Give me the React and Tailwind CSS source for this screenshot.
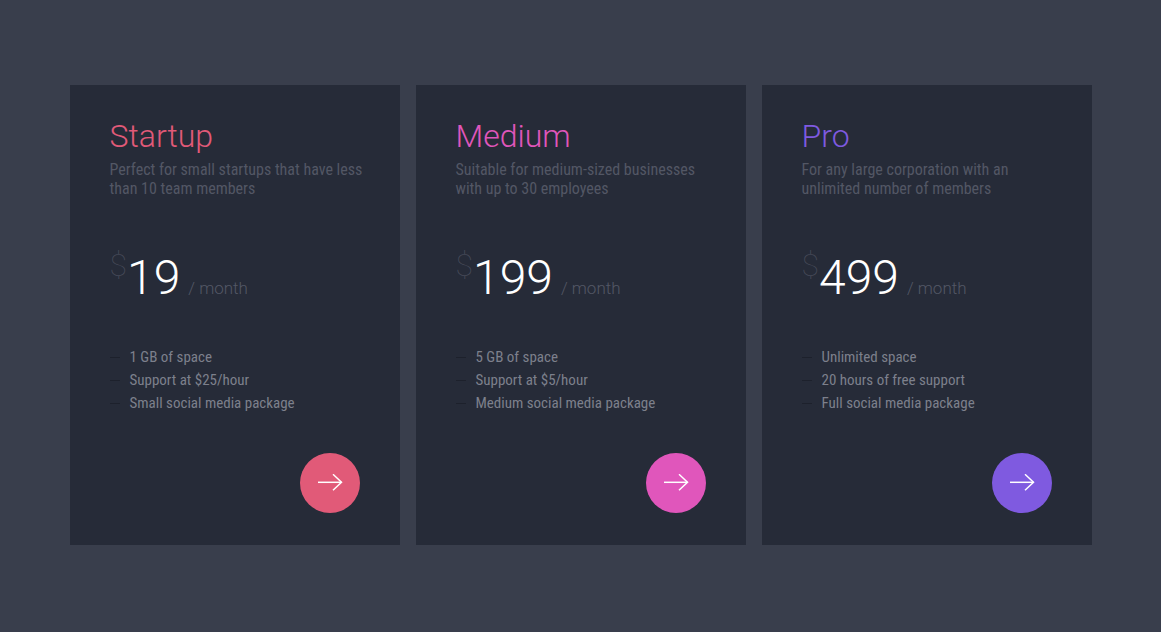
import React from "react";

const plans = [
  {
    name: "Startup",
    color: "text-[#e15a78]",
    button: "bg-[#e15a78]",
    description: ["Perfect for small startups that have less", "than 10 team members"],
    price: "19",
    features: ["1 GB of space", "Support at $25/hour", "Small social media package"],
  },
  {
    name: "Medium",
    color: "text-[#e056bb]",
    button: "bg-[#e056bb]",
    description: ["Suitable for medium-sized businesses", "with up to 30 employees"],
    price: "199",
    features: ["5 GB of space", "Support at $5/hour", "Medium social media package"],
  },
  {
    name: "Pro",
    color: "text-[#7f5ae0]",
    button: "bg-[#7f5ae0]",
    description: ["For any large corporation with an", "unlimited number of members"],
    price: "499",
    features: ["Unlimited space", "20 hours of free support", "Full social media package"],
  },
];

function ArrowIcon() {
  return (
    <svg width="26" height="18" viewBox="0 0 26 18" fill="none" stroke="#ffffff" strokeWidth="1.5">
      <path d="M1 8.3H24.5" />
      <path d="M16 0.3L24.5 8.3L16 16.3" />
    </svg>
  );
}

function PlanCard({ plan }) {
  return (
    <div className="w-[330px] h-[460px] bg-[#262b38] pt-[31px] px-10 flex flex-col">
      <h2 className={`text-[32px] leading-10 font-light ${plan.color}`}>{plan.name}</h2>
      <p className="mt-[4px] text-base leading-[19px] text-[#535765] [font-stretch:75%] whitespace-nowrap">
        {plan.description[0]}
        <br />
        {plan.description[1]}
      </p>
      <div className="mt-[44px] h-[60px] flex items-start">
        <span className="text-[32px] leading-10 font-thin text-[#454957] mt-[3px]">$</span>
        <span className="text-[48px] leading-[60px] font-light text-white mt-[6px]">{plan.price}</span>
        <span className="ml-[8px] mt-[34px] text-[17px] leading-6 font-light text-[#535765]">/ month</span>
      </div>
      <ul className="mt-[44px] flex flex-col">
        {plan.features.map((feature) => (
          <li key={feature} className="h-[23px] flex items-center text-[15px] text-[#7d808c] [font-stretch:75%]">
            <span className="w-[10px] h-px bg-[#1d212c] mr-[10px]" />
            {feature}
          </li>
        ))}
      </ul>
      <div className="mt-[38px] flex justify-end">
        <button className={`w-[60px] h-[60px] rounded-full flex items-center justify-center ${plan.button}`}>
          <ArrowIcon />
        </button>
      </div>
    </div>
  );
}

export default function App() {
  return (
    <div className="min-h-screen bg-[#393e4c] pt-[85px] font-['Roboto',sans-serif]">
      <div className="flex justify-center gap-4">
        {plans.map((plan) => (
          <PlanCard key={plan.name} plan={plan} />
        ))}
      </div>
    </div>
  );
}
